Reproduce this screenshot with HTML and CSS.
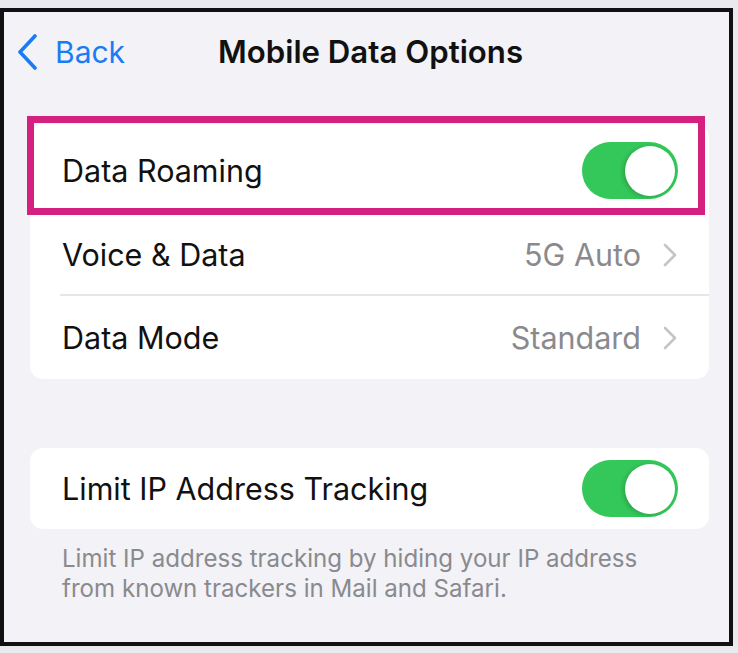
FILE: index.html
```html
<!DOCTYPE html>
<html lang="en">
<head>
    <meta charset="UTF-8">
    <meta name="viewport" content="width=device-width, initial-scale=1.0">
    <title>Mobile Data Options</title>
    <link rel="stylesheet" href="styles.css">
</head>
<body>
    <div class="frame">
        <div class="nav">
            <a class="back" href="#">
                <svg class="back-icon" width="22" height="36" viewBox="0 0 22 36">
                    <polyline points="18,2 3,18 18,34" fill="none" stroke="#1a7cf4" stroke-width="3.6" stroke-linecap="round" stroke-linejoin="round"/>
                </svg>
                <span>Back</span>
            </a>
            <h1>Mobile Data Options</h1>
        </div>

        <div class="group first">
            <div class="row highlighted">
                <span class="label">Data Roaming</span>
                <span class="toggle on"><span class="knob"></span></span>
                <div class="highlight"></div>
            </div>
            <div class="row link">
                <span class="label">Voice &amp; Data</span>
                <span class="value">5G Auto</span>
                <svg class="chevron" width="16" height="24" viewBox="0 0 16 24">
                    <polyline points="3,2 13,12 3,22" fill="none" stroke="#c5c5c8" stroke-width="2.6" stroke-linecap="round" stroke-linejoin="round"/>
                </svg>
            </div>
            <div class="row link last">
                <span class="label">Data Mode</span>
                <span class="value">Standard</span>
                <svg class="chevron" width="16" height="24" viewBox="0 0 16 24">
                    <polyline points="3,2 13,12 3,22" fill="none" stroke="#c5c5c8" stroke-width="2.6" stroke-linecap="round" stroke-linejoin="round"/>
                </svg>
            </div>
        </div>

        <div class="group second">
            <div class="row single">
                <span class="label">Limit IP Address Tracking</span>
                <span class="toggle on"><span class="knob"></span></span>
            </div>
        </div>
        <p class="footer">Limit IP address tracking by hiding your IP address from known trackers in Mail and Safari.</p>
    </div>
</body>
</html>
```

FILE: styles.css
```css
* {
    box-sizing: border-box;
}
body {
    margin: 0;
    background: #e9e9ee;
    font-family: Inter, "Liberation Sans", sans-serif;
    color: #111;
}
.frame {
    margin-top: 8px;
    width: 733px;
    height: 638px;
    border: 4px solid #111;
    background: #f2f2f7;
    overflow: hidden;
}
.nav {
    display: flex;
    align-items: center;
    height: 80px;
    padding-left: 13px;
}
.back {
    display: flex;
    align-items: center;
    gap: 16px;
    color: #1a7cf4;
    text-decoration: none;
    font-size: 30px;
    width: 201px;
}
.back-icon {
    display: block;
}
h1 {
    margin: 0;
    font-size: 31.2px;
    font-weight: 600;
    color: #111;
}
.group {
    background: white;
    border-radius: 13px;
    margin: 0 20px 0 26px;
}
.first {
    margin-top: 32px;
}
.second {
    margin-top: 69px;
}
.row {
    position: relative;
    display: flex;
    align-items: center;
    height: 83px;
    padding: 0 31px 0 32px;
    font-size: 30.5px;
}
.row.highlighted {
    height: 89px;
    padding-top: 4px;
}
.row.link::after {
    content: "";
    position: absolute;
    left: 30px;
    right: 0;
    bottom: 0;
    border-bottom: 2px solid #e6e6ea;
}
.row.last::after {
    display: none;
}
.row.single {
    height: 81px;
}
.label {
    flex: 1;
}
.value {
    color: #8a8a8e;
    margin-right: 21px;
}
.chevron {
    display: block;
}
.toggle {
    position: relative;
    width: 96px;
    height: 57px;
    border-radius: 29px;
    background: #d9d9de;
}
.toggle.on {
    background: #34c759;
}
.knob {
    position: absolute;
    top: 3.5px;
    right: 3.5px;
    width: 50px;
    height: 50px;
    border-radius: 50%;
    background: white;
    box-shadow: -2px 1px 4px rgba(0,0,0,0.18);
}
.highlight {
    position: absolute;
    left: -3px;
    right: 4px;
    top: -8px;
    bottom: -2px;
    border: 7px solid #d4217f;
}
.footer {
    margin: 15px 0 0 58px;
    font-size: 24.1px;
    line-height: 30px;
    color: #8a8a8e;
    width: 610px;
}
```
